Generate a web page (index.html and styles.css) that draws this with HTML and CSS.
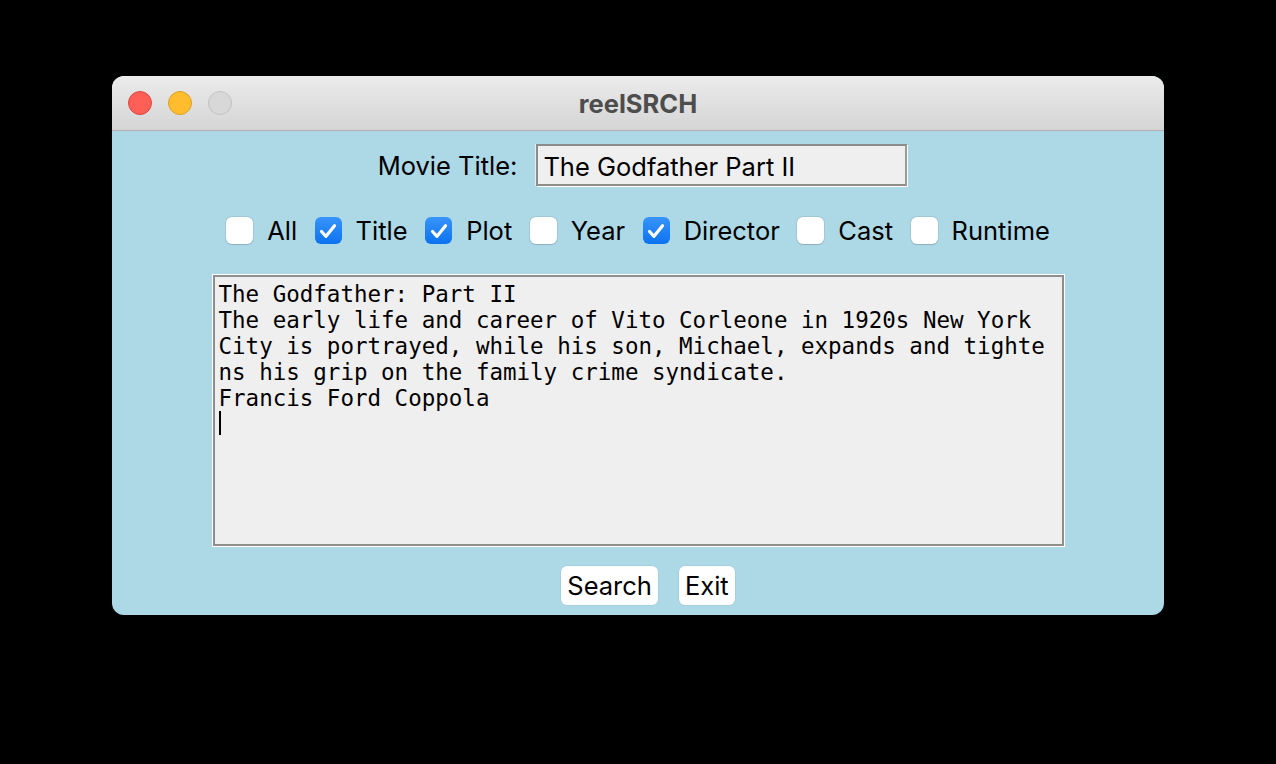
FILE: index.html
```html
<!DOCTYPE html>
<html>
<head>
<meta charset="utf-8">
<link rel="stylesheet" href="styles.css">
</head>
<body>
<div class="window">
  <div class="titlebar">
    <div class="lights">
      <span class="light red"></span>
      <span class="light yellow"></span>
      <span class="light gray"></span>
    </div>
    <div class="title">reelSRCH</div>
  </div>
  <div class="content">
    <div class="row-title">
      <label class="label">Movie Title:</label>
      <div class="entry">The Godfather Part II</div>
    </div>
    <div class="row-checks">
      <div class="check"><span class="box"></span><span class="clabel">All</span></div>
      <div class="check"><span class="box on"><svg viewBox="0 0 26 26" width="26" height="26"><path d="M6.5 13.5 L11 18.3 L19.5 7.8" fill="none" stroke="#fff" stroke-width="3.2" stroke-linecap="round" stroke-linejoin="round"/></svg></span><span class="clabel">Title</span></div>
      <div class="check"><span class="box on"><svg viewBox="0 0 26 26" width="26" height="26"><path d="M6.5 13.5 L11 18.3 L19.5 7.8" fill="none" stroke="#fff" stroke-width="3.2" stroke-linecap="round" stroke-linejoin="round"/></svg></span><span class="clabel">Plot</span></div>
      <div class="check"><span class="box"></span><span class="clabel">Year</span></div>
      <div class="check"><span class="box on"><svg viewBox="0 0 26 26" width="26" height="26"><path d="M6.5 13.5 L11 18.3 L19.5 7.8" fill="none" stroke="#fff" stroke-width="3.2" stroke-linecap="round" stroke-linejoin="round"/></svg></span><span class="clabel">Director</span></div>
      <div class="check"><span class="box"></span><span class="clabel">Cast</span></div>
      <div class="check"><span class="box"></span><span class="clabel">Runtime</span></div>
    </div>
    <div class="textbox">
      <div class="text">The Godfather: Part II
The early life and career of Vito Corleone in 1920s New York
City is portrayed, while his son, Michael, expands and tighte
ns his grip on the family crime syndicate.
Francis Ford Coppola
<span class="caret"></span></div>
    </div>
    <div class="row-buttons">
      <button class="btn">Search</button>
      <button class="btn">Exit</button>
    </div>
  </div>
</div>
</body>
</html>
```
FILE: styles.css
```css
html, body {
  margin: 0;
  padding: 0;
  background: #000;
  width: 1276px;
  height: 764px;
  overflow: hidden;
}
body {
  font-family: "Inter", "Liberation Sans", sans-serif;
}
.window {
  margin: 76px 0 0 112px;
  width: 1052px;
  height: 539px;
  border-radius: 12px;
  overflow: hidden;
  background: #add8e6;
  display: flex;
  flex-direction: column;
}
.titlebar {
  height: 54px;
  background: linear-gradient(#ebebeb, #d5d5d5);
  border-bottom: 1px solid #b2b2b2;
  display: flex;
  align-items: center;
  position: relative;
  flex: none;
}
.lights {
  display: flex;
  gap: 16px;
  padding-left: 16px;
}
.light {
  width: 24px;
  height: 24px;
  border-radius: 50%;
  box-sizing: border-box;
}
.red { background: #fe5f57; border: 1px solid #e0443e; }
.yellow { background: #febc2e; border: 1px solid #dea123; }
.gray { background: #d8d8d8; border: 1px solid #c2c2c2; }
.title {
  position: absolute;
  left: 0;
  right: 0;
  text-align: center;
  font-weight: 700;
  font-size: 25.5px;
  color: #4d4d4d;
}
.content {
  flex: 1;
  display: flex;
  flex-direction: column;
  align-items: center;
}
.row-title {
  margin-top: 13px;
  display: flex;
  align-items: center;
  gap: 19px;
  margin-left: 9px;
}
.label {
  font-size: 25.5px;
  color: #000;
}
.entry {
  width: 371px;
  height: 42px;
  box-sizing: border-box;
  background: #efefef;
  border: 2px solid #8c8c8c;
  border-right-color: #9a9a9a;
  box-shadow: 1px 1px 0 #fff, -1px 0 0 #e6eef0;
  font-size: 25.5px;
  color: #000;
  padding: 4px 0 0 5px;
  line-height: 34px;
}
.row-checks {
  margin-top: 29px;
  display: flex;
  align-items: center;
  gap: 17.5px;
}
.check {
  display: flex;
  align-items: center;
  gap: 14px;
}
.box {
  width: 27px;
  height: 27px;
  border-radius: 6px;
  background: #fff;
  box-sizing: border-box;
  box-shadow: 0 0 0 1px rgba(0,0,0,0.06), 0 0.5px 1px rgba(0,0,0,0.12);
  display: flex;
  align-items: center;
  justify-content: center;
}
.box.on {
  background: linear-gradient(#3894fb, #0c72ef);
  box-shadow: none;
}
.box svg { display: block; }
.clabel {
  font-size: 25.5px;
  color: #000;
}
.textbox {
  margin-top: 29px;
  width: 851px;
  height: 271px;
  box-sizing: border-box;
  background: #efefef;
  border: 2px solid #8e8e8e;
  box-shadow: 0 0 0 1px #fff;
  padding: 4px 0 0 4px;
}
.text {
  font-family: "DejaVu Sans Mono", "Liberation Mono", monospace;
  font-size: 22.5px;
  line-height: 26px;
  white-space: pre;
  color: #000;
}
.caret {
  display: inline-block;
  width: 2px;
  height: 24px;
  background: #000;
  vertical-align: top;
  margin-top: 0px;
}
.row-buttons {
  margin-top: 20px;
  display: flex;
  gap: 21px;
  margin-left: 20px;
}
.btn {
  font-family: "Inter", "Liberation Sans", sans-serif;
  font-size: 25.5px;
  background: #fff;
  border: none;
  border-radius: 6px;
  height: 39px;
  padding: 0 6px;
  color: #000;
  box-shadow: 0 0 0 0.5px rgba(0,0,0,0.08);
}
```
